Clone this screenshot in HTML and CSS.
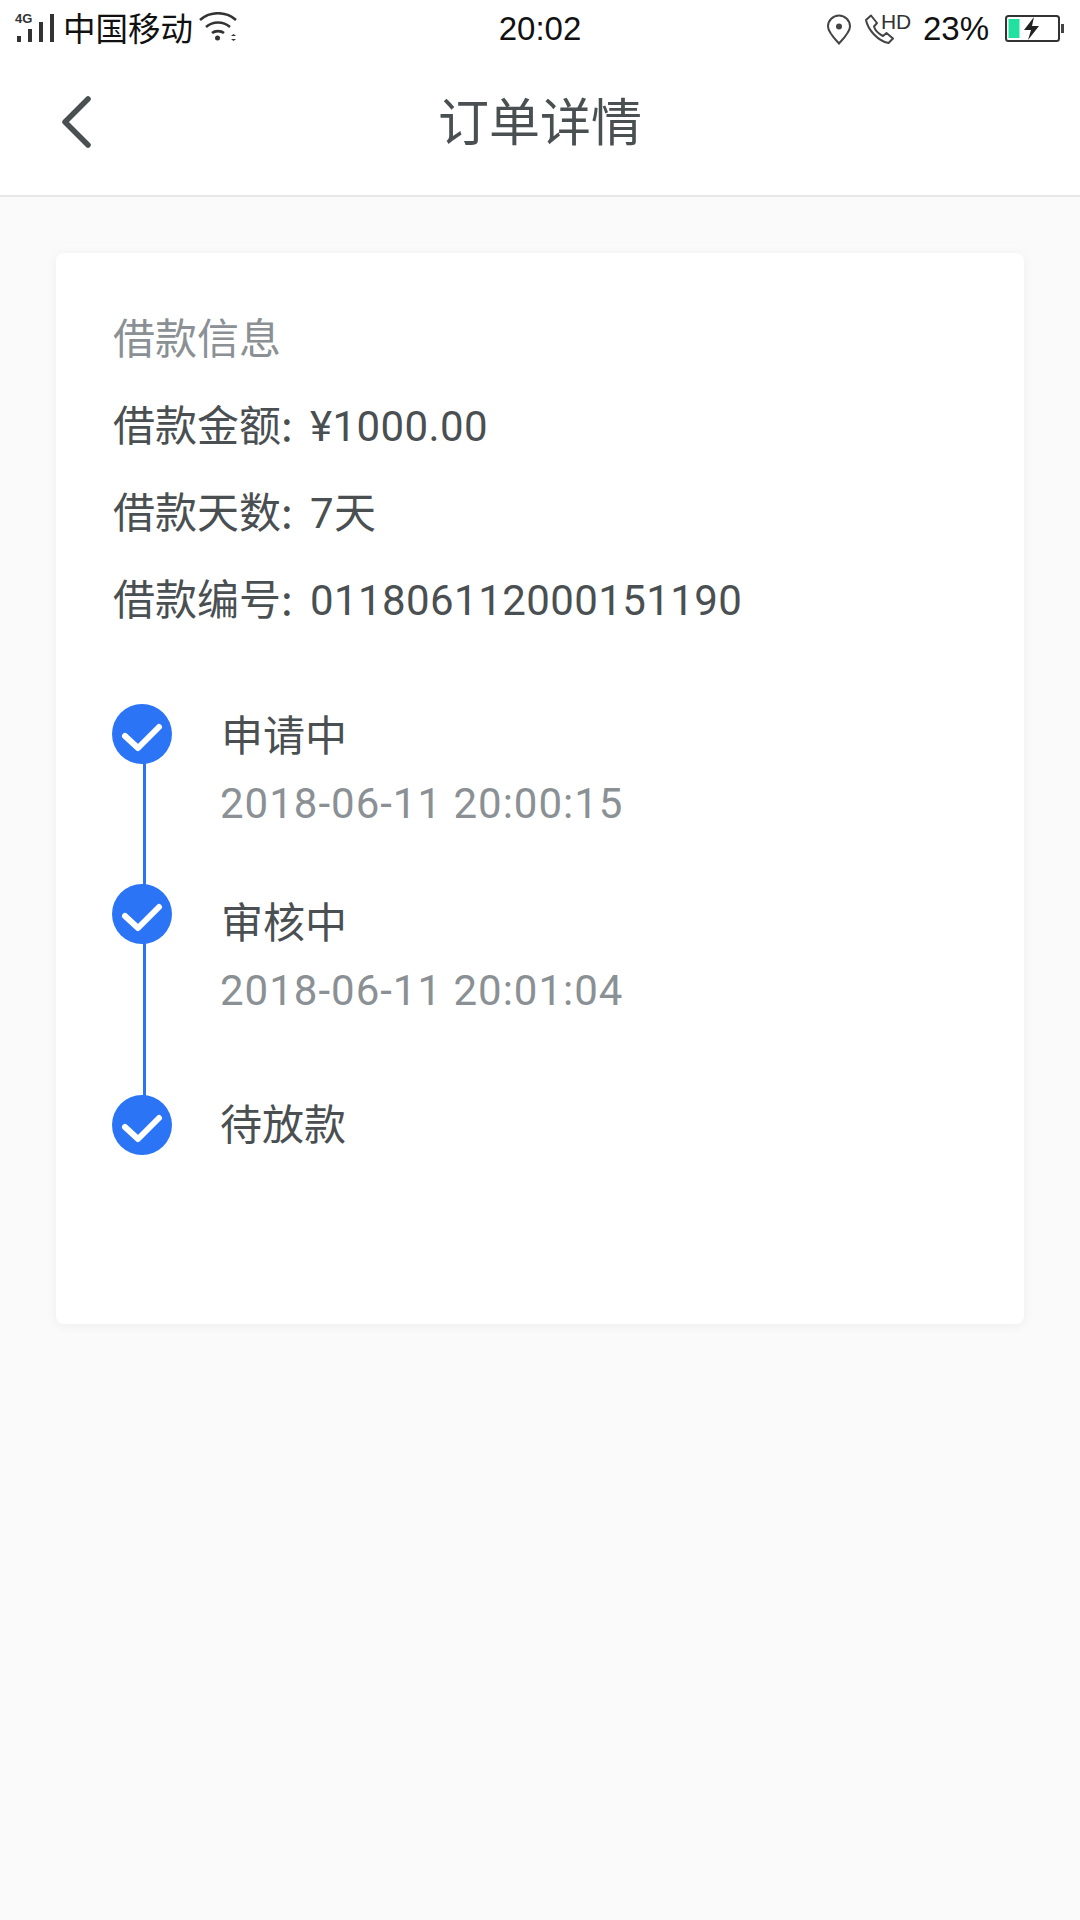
FILE: index.html
```html
<!DOCTYPE html>
<html lang="zh-CN">
<head>
<meta charset="utf-8">
<title>订单详情</title>
<link rel="stylesheet" href="styles.css">
</head>
<body>
<div class="status">
  <div class="status-left">
    <span class="signal">
      <span class="net">4G</span>
      <svg class="bars" width="40" height="28" viewBox="0 0 40 28"><rect x="2" y="22" width="4" height="6"/><rect x="13" y="15" width="4" height="13"/><rect x="24" y="8" width="4" height="20"/><rect x="35" y="0" width="4" height="28"/></svg>
    </span>
    <span class="carrier">中国移动</span>
    <svg class="wifi" width="38" height="30" viewBox="0 0 38 30" fill="none" stroke="#333" stroke-width="2.6"><path d="M1 8C11-1 27-1 37 8"/><path d="M7 15C14 9 24 9 31 15"/><path d="M13 21C16 18.500 22 18.500 25 21"/><circle cx="18.500" cy="26" r="2.500" fill="#333" stroke="none"/><path d="M32 24l2.500-2 2.500 2zM32 27l2.500 2 2.500-2z" fill="#333" stroke="none"/></svg>
  </div>
  <div class="clock">20:02</div>
  <div class="status-right">
    <svg class="pin" width="26" height="31" viewBox="0 0 26 31" fill="none" stroke="#444" stroke-width="2"><path d="M13 29.500C8 24 2 18 2 12.500a11 11 0 0 1 22 0C24 18 18 24 13 29.500z"/><circle cx="13" cy="12.500" r="3" fill="#444" stroke="none"/></svg>
    <span class="call">
      <svg width="30" height="30" viewBox="0 0 30 30" fill="none" stroke="#444" stroke-width="2" stroke-linejoin="round"><path d="M2 6L7 1.500 13 9 10 12.500C11 16 15 20 19 22L22.500 19 29 24.500 24.500 29C14 27 4 16 2 6z"/></svg>
      <span class="hd">HD</span>
    </span>
    <span class="pct">23%</span>
    <svg class="batt" width="60" height="28" viewBox="0 0 60 28"><rect x="1" y="1" width="53" height="25" rx="2.500" fill="none" stroke="#333" stroke-width="2"/><rect x="3.500" y="4" width="11" height="19" fill="#22e09f"/><path d="M29 2L19 15h7L23 25 34 11h-7l2-9z" fill="#222"/><rect x="56" y="9" width="3" height="9" fill="#444"/></svg>
  </div>
</div>

<header class="nav">
  <svg class="back" width="30" height="52" viewBox="0 0 30 52" fill="none" stroke="#4a4f52" stroke-width="5.500" stroke-linecap="round" stroke-linejoin="round"><path d="M26 3L3 26l23 23"/></svg>
  <h1 class="title">订单详情</h1>
</header>

<main class="content">
  <section class="card">
    <div class="info">
      <div class="row muted">借款信息</div>
      <div class="row">借款金额: <span class="val">¥1000.00</span></div>
      <div class="row">借款天数: <span class="val">7天</span></div>
      <div class="row">借款编号: <span class="val">011806112000151190</span></div>
    </div>
    <ol class="steps">
      <li class="step">
        <div class="rail"><svg class="dot" width="60" height="60" viewBox="0 0 60 60"><circle cx="30" cy="30" r="30" fill="#2a74f5"/><path d="M13 32l13 12 21-21" fill="none" stroke="#fff" stroke-width="6" stroke-linecap="round" stroke-linejoin="round"/></svg></div>
        <div class="body"><div class="name">申请中</div><div class="time">2018-06-11 20:00:15</div></div>
      </li>
      <li class="step">
        <div class="rail"><svg class="dot" width="60" height="60" viewBox="0 0 60 60"><circle cx="30" cy="30" r="30" fill="#2a74f5"/><path d="M13 32l13 12 21-21" fill="none" stroke="#fff" stroke-width="6" stroke-linecap="round" stroke-linejoin="round"/></svg></div>
        <div class="body"><div class="name">审核中</div><div class="time">2018-06-11 20:01:04</div></div>
      </li>
      <li class="step last">
        <div class="rail"><svg class="dot" width="60" height="60" viewBox="0 0 60 60"><circle cx="30" cy="30" r="30" fill="#2a74f5"/><path d="M13 32l13 12 21-21" fill="none" stroke="#fff" stroke-width="6" stroke-linecap="round" stroke-linejoin="round"/></svg></div>
        <div class="body"><div class="name">待放款</div></div>
      </li>
    </ol>
  </section>
</main>
</body>
</html>
```

FILE: styles.css
```css
* { box-sizing: border-box; }
html, body { margin: 0; padding: 0; }
body {
  width: 1080px;
  height: 1920px;
  overflow: hidden;
  background: #fafafa;
  font-family: "Noto Sans CJK SC", "Noto Sans", sans-serif;
  color: #4a4f52;
}
.status {
  height: 58px;
  background: #fff;
  display: flex;
  align-items: center;
  justify-content: space-between;
  position: relative;
  padding: 0 15px;
  color: #111;
}
.status-left, .status-right { display: flex; align-items: center; }
.signal { position: relative; width: 40px; height: 30px; display: block; }
.net {
  position: absolute; left: 0; top: -3px;
  font: bold 13px "Liberation Sans", sans-serif;
  color: #333;
}
.bars { position: absolute; left: 0; top: 0; fill: #333; }
.carrier { font-size: 32.500px; line-height: 40px; margin-left: 8px; position: relative; top: -2px; }
.wifi { margin-left: 6px; position: relative; top: -2px; }
.clock {
  position: absolute; left: 0; right: 0; text-align: center;
  font: 33px/40px "Liberation Sans", sans-serif;
}
.status-right { font-family: "Liberation Sans", sans-serif; }
.pin { margin-right: 12px; }
.call { display: flex; position: relative; width: 45px; height: 30px; margin-right: 14px; }
.hd { position: absolute; left: 17px; top: -4px; font-size: 21px; line-height: 24px; color: #333; }
.pct { font-size: 33px; line-height: 40px; margin-right: 16px; }
.nav {
  height: 139px;
  background: #fff;
  border-bottom: 2px solid #e8e8e8;
  display: flex;
  align-items: center;
  justify-content: center;
  position: relative;
}
.back { position: absolute; left: 62px; top: 38px; }
.title { margin: 0; font-size: 51px; font-weight: 400; line-height: 70px; color: #4a4f52; position: relative; top: -8px; }
.content { padding: 56px 56px 0; }
.card {
  height: 1071px;
  background: #fff;
  border-radius: 8px;
  box-shadow: 0 2px 12px rgba(0,0,0,.05);
  padding: 39px 57px 0;
}
.row { font-size: 42px; line-height: 87px; height: 87px; }
.muted { color: #8a9094; }
.val { font-family: Roboto, "Noto Sans CJK SC", sans-serif; letter-spacing: .4px; margin-left: 8px; }
.steps { list-style: none; margin: 64px 0 0; padding: 0; }
.step { display: flex; height: 180px; position: relative; }
.step:nth-child(2) { height: 211px; }
.step.last { height: auto; }
.rail { width: 60px; margin-left: -1px; position: relative; flex: none; }
.dot { display: block; position: relative; z-index: 1; }
.rail::after {
  content: "";
  position: absolute;
  left: 31px;
  top: 50px;
  width: 3px;
  height: 140px;
  background: #2a74f5;
}
.step:nth-child(2) .rail::after { height: 170px; }
.step.last .rail::after { display: none; }
.body { margin: -1px 0 0 49px; }
.step:nth-child(2) .body { margin-top: 6px; }
.step.last .body { margin: -3px 0 0 48px; }
.name { font-size: 42px; line-height: 60px; color: #4a4f52; }
.time { font-family: Roboto, "Noto Sans CJK SC", sans-serif; font-size: 42px; line-height: 60px; margin: 11px 0 0 -1px; color: #8a9094; letter-spacing: 1px; }
```
